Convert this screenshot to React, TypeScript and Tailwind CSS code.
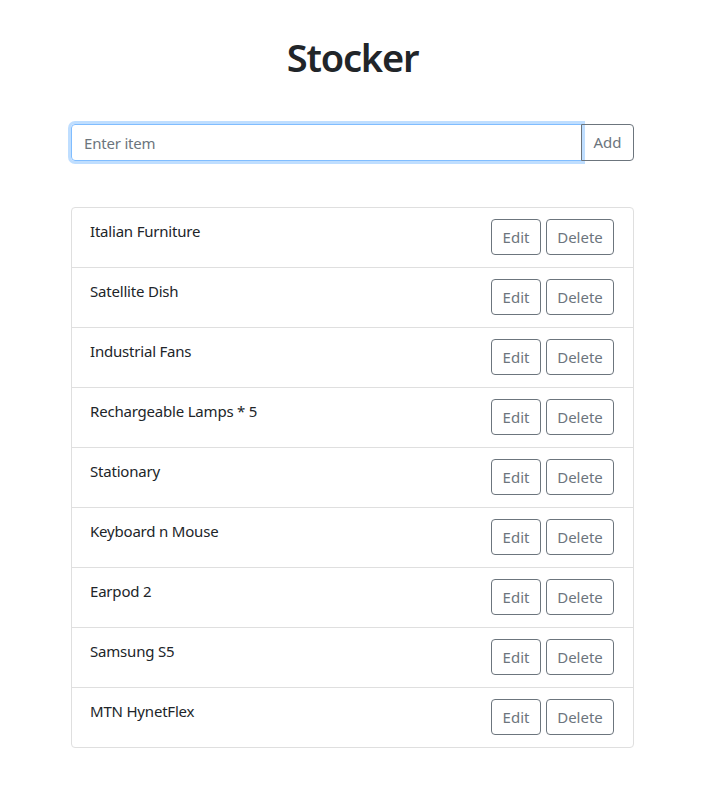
const items = [
  'Italian Furniture',
  'Satellite Dish',
  'Industrial Fans',
  'Rechargeable Lamps * 5',
  'Stationary',
  'Keyboard n Mouse',
  'Earpod 2',
  'Samsung S5',
  'MTN HynetFlex',
];

export default function App() {
  return (
    <div className="min-h-screen bg-white font-['Noto_Sans',sans-serif] text-[#212529]">
      <div className="ml-[71px] w-[563px] pt-[33px]">
        <h1 className="text-center text-[38px] font-semibold leading-[48px] tracking-[-1.2px]">Stocker</h1>

        {/* add form */}
        <div className="mt-[43px] flex h-[37px]">
          <input
            autoFocus
            placeholder="Enter item"
            className="h-full min-w-0 flex-1 rounded-l border border-[#80bdff] px-3 text-[15px] tracking-[-0.2px] text-[#495057] shadow-[0_0_0_3px_rgba(0,123,255,0.25)] outline-none placeholder:text-[#6c757d]"
          />
          <button className="-ml-px h-full w-[53px] rounded-r border border-[#6c757d] text-[15px] text-[#6c757d]">Add</button>
        </div>

        {/* stock list */}
        <ul className="mt-[46px] rounded border border-[#dfdfdf]">
          {items.map((item, i) => (
            <li
              key={item}
              className={`flex items-start justify-between pl-[18px] pr-[19px] pt-[11px] pb-3 ${i > 0 ? 'border-t border-[#dfdfdf]' : ''}`}
            >
              <span className="text-[15px] leading-6 tracking-[-0.2px]">{item}</span>
              <div className="flex gap-[5px]">
                <button className="h-9 w-[50px] rounded border border-[#6c757d] text-[15px] text-[#6c757d]">Edit</button>
                <button className="h-9 w-[68px] rounded border border-[#6c757d] text-[15px] text-[#6c757d]">Delete</button>
              </div>
            </li>
          ))}
        </ul>
      </div>
    </div>
  );
}
